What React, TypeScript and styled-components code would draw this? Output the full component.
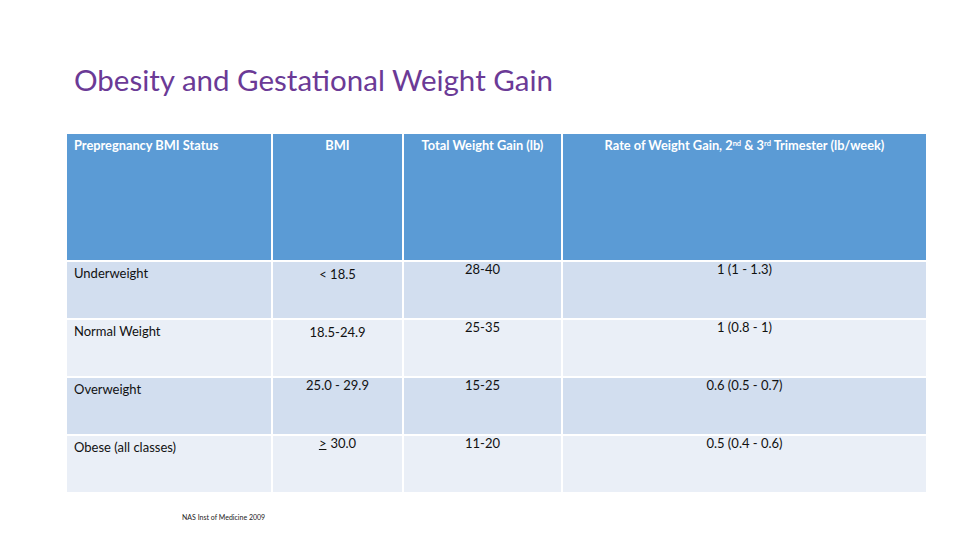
import React from "react";
import styled, { createGlobalStyle } from "styled-components";

const Global = createGlobalStyle`
  html, body { margin: 0; padding: 0; background: #ffffff; }
  body { font-family: Lato, "Open Sans", sans-serif; }
`;

const Slide = styled.div`
  width: 960px;
  height: 540px;
  box-sizing: border-box;
  padding: 62px 0 0 67px;
  display: flex;
  flex-direction: column;
  overflow: hidden;
`;

const Title = styled.h1`
  margin: 0 0 0 7px;
  font-family: Lato, sans-serif;
  font-weight: 400;
  font-size: 29.5px;
  line-height: 36px;
  color: #6b3a96;
  height: 36px;
`;

const Grid = styled.div`
  margin-top: 36px;
  display: grid;
  grid-template-columns: 204px 129px 157px 363px;
  grid-template-rows: 126px 56px 56px 56px 56px;
  column-gap: 2px;
  row-gap: 2px;
  width: 859px;
`;

const HeadCell = styled.div<{ $align: "left" | "center" }>`
  background: #5b9bd5;
  color: #ffffff;
  font-family: Lato, sans-serif;
  font-weight: 700;
  font-size: 12.8px;
  line-height: 16px;
  padding: 3px 7px 0;
  text-align: ${(p) => p.$align};
  sup { font-size: 7.5px; line-height: 0; vertical-align: 4px; }
`;

const Cell = styled.div<{ $shade: boolean; $align: "left" | "center"; $top: number }>`
  background: ${(p) => (p.$shade ? "#d2deef" : "#eaeff7")};
  color: #111111;
  font-family: Lato, sans-serif;
  font-size: 13px;
  line-height: 14px;
  padding: ${(p) => p.$top}px 7px 0;
  text-align: ${(p) => p.$align};
`;

const Ge = styled.span`
  text-decoration: underline;
  margin-right: 4px;
`;

const Note = styled.div`
  margin: 21px 0 0 115px;
  font-family: Lato, sans-serif;
  font-size: 7px;
  color: #222;
`;

type Row = { status: string; bmi: React.ReactNode; total: string; rate: string; tops: number[] };

const rows: Row[] = [
  { status: "Underweight", bmi: "< 18.5", total: "28-40", rate: "1 (1 - 1.3)", tops: [4, 5, 0, 0] },
  { status: "Normal Weight", bmi: "18.5-24.9", total: "25-35", rate: "1 (0.8 - 1)", tops: [4, 5, 0, 0] },
  { status: "Overweight", bmi: "25.0 - 29.9", total: "15-25", rate: "0.6 (0.5 - 0.7)", tops: [4, 0, 0, 0] },
  {
    status: "Obese (all classes)",
    bmi: (
      <>
        <Ge>&gt;</Ge>30.0
      </>
    ),
    total: "11-20",
    rate: "0.5 (0.4 - 0.6)",
    tops: [4, 0, 0, 0],
  },
];

export default function App() {
  return (
    <>
      <Global />
      <Slide>
        <Title>Obesity and Gestational Weight Gain</Title>
        <Grid>
          <HeadCell $align="left">Prepregnancy BMI Status</HeadCell>
          <HeadCell $align="center">BMI</HeadCell>
          <HeadCell $align="center">Total Weight Gain (lb)</HeadCell>
          <HeadCell $align="center">
            Rate of Weight Gain, 2<sup>nd</sup> &amp; 3<sup>rd</sup> Trimester (lb/week)
          </HeadCell>
          {rows.map((r, i) => (
            <React.Fragment key={r.status}>
              <Cell $shade={i % 2 === 0} $align="left" $top={r.tops[0]}>{r.status}</Cell>
              <Cell $shade={i % 2 === 0} $align="center" $top={r.tops[1]}>{r.bmi}</Cell>
              <Cell $shade={i % 2 === 0} $align="center" $top={r.tops[2]}>{r.total}</Cell>
              <Cell $shade={i % 2 === 0} $align="center" $top={r.tops[3]}>{r.rate}</Cell>
            </React.Fragment>
          ))}
        </Grid>
        <Note>NAS Inst of Medicine 2009</Note>
      </Slide>
    </>
  );
}
